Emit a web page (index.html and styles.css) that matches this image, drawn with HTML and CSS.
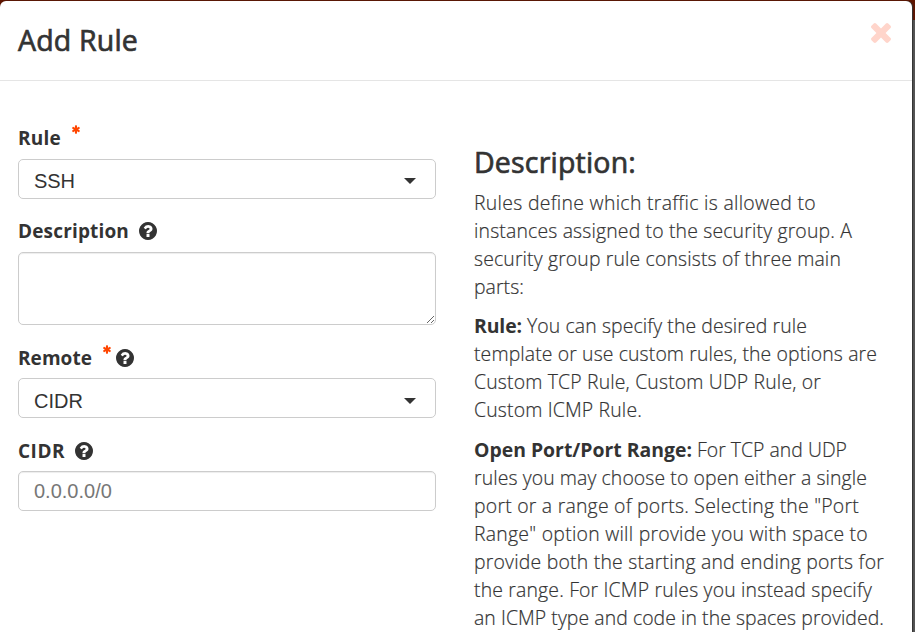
FILE: index.html
```html
<!DOCTYPE html>
<html lang="en">
<head>
<meta charset="utf-8">
<title>Add Rule</title>
<link rel="stylesheet" href="styles.css">
</head>
<body>
<svg class="defs" width="0" height="0">
  <symbol id="help" viewBox="0 0 1536 1536"><path d="M896 1248v-192q0-14-9-23t-23-9h-192q-14 0-23 9t-9 23v192q0 14 9 23t23 9h192q14 0 23-9t9-23zM1152 576q0-88-55.500-163t-138.500-116-170-41q-243 0-371 213-15 24 8 42l132 100q7 6 19 6 16 0 25-12 53-68 86-92 34-24 86-24 48 0 85.500 26t37.500 59q0 38-20 61t-68 45q-63 28-115.500 86.500t-52.500 125.500v36q0 14 9 23t23 9h192q14 0 23-9t9-23q0-19 21.500-49.500t54.500-49.500q32-18 49-28.500t46-35 44.500-48 28-60.500 12.500-81zM1536 768q0 209-103 385.500t-279.500 279.500-385.500 103-385.500-103-279.500-279.500-103-385.500 103-385.500 279.500-279.500 385.500-103 385.500 103 279.500 279.500 103 385.500z"/></symbol>
  <symbol id="star" viewBox="0 0 1482 1536"><path d="M1386 922q46 26 59.500 77.500t-12.500 97.500l-64 110q-26 46-77.500 59.500t-97.500-12.500l-266-153v307q0 52-38 90t-90 38h-128q-52 0-90-38t-38-90v-307l-266 153q-46 26-97.500 12.500t-77.500-59.500l-64-110q-26-46-12.500-97.500t59.500-77.500l266-154-266-154q-46-26-59.500-77.500t12.500-97.500l64-110q26-46 77.500-59.500t97.500 12.500l266 153v-307q0-52 38-90t90-38h128q52 0 90 38t38 90v307l266-153q46-26 97.500-12.500t77.500 59.500l64 110q26 46 12.500 97.500t-59.500 77.500l-266 154z"/></symbol>
</svg>
<div class="modal">
  <header class="modal-header">
    <h1><span data-width="120">Add Rule</span></h1>
    <svg class="close" viewBox="0 0 1188 1188"><path d="M1188 956q0 40-28 68l-136 136q-28 28-68 28t-68-28L594 866l-294 294q-28 28-68 28t-68-28L28 1024q-28-28-28-68t28-68l294-294L28 300Q0 272 0 232t28-68L164 28q28-28 68-28t68 28l294 294L888 28q28-28 68-28t68 28l136 136q28 28 28 68t-28 68L866 594l294 294q28 28 28 68z"/></svg>
  </header>
  <div class="modal-body">
    <form class="fields">
      <div class="label"><span data-width="43">Rule</span><svg class="required"><use href="#star"/></svg></div>
      <div class="control select"><span data-width="41">SSH</span><i class="caret"></i></div>
      <div class="label"><span data-width="111">Description</span><svg class="help"><use href="#help"/></svg></div>
      <textarea class="control area"></textarea>
      <div class="label low"><span data-width="74">Remote</span><svg class="required"><use href="#star"/></svg><svg class="help near"><use href="#help"/></svg></div>
      <div class="control select"><span data-width="49">CIDR</span><i class="caret"></i></div>
      <div class="label low"><span data-width="47">CIDR</span><svg class="help"><use href="#help"/></svg></div>
      <input class="control" placeholder="0.0.0.0/0">
    </form>
    <section class="info">
      <h2><span data-width="162">Description:</span></h2>
      <p>
        <span data-width="342">Rules define which traffic is allowed to</span>
        <span data-width="378">instances assigned to the security group. A</span>
        <span data-width="367">security group rule consists of three main</span>
        <span data-width="50">parts:</span>
      </p>
      <p>
        <span class="pair"><b data-width="48">Rule:</b><span data-width="280">You can specify the desired rule</span></span>
        <span data-width="403">template or use custom rules, the options are</span>
        <span data-width="347">Custom TCP Rule, Custom UDP Rule, or</span>
        <span data-width="168">Custom ICMP Rule.</span>
      </p>
      <p>
        <span class="pair"><b data-width="218">Open Port/Port Range:</b><span data-width="150">For TCP and UDP</span></span>
        <span data-width="393">rules you may choose to open either a single</span>
        <span data-width="385">port or a range of ports. Selecting the "Port</span>
        <span data-width="394">Range" option will provide you with space to</span>
        <span data-width="410">provide both the starting and ending ports for</span>
        <span data-width="398">the range. For ICMP rules you instead specify</span>
        <span data-width="410">an ICMP type and code in the spaces provided.</span>
      </p>
    </section>
  </div>
</div>
<script src="script.js"></script>
</body>
</html>
```
FILE: styles.css
```css
* { box-sizing: border-box; }
body {
  margin: 0;
  height: 632px;
  overflow: hidden;
  padding: 1px 3px 0 0;
  background: linear-gradient(#5e1500 20px, #555 20px);
  color: #333;
  font: 300 19.4px/28px "Open Sans", "Noto Sans", sans-serif;
}
.defs { display: block; width: 0; height: 0; }
.modal { height: 631px; background: #fff; border-radius: 6px 6px 0 0; box-shadow: 1px 0 1px #333; }
.modal-header {
  height: 80px;
  border-bottom: 1px solid #e5e5e5;
  padding: 22px 21px 0 18px;
  display: flex;
  justify-content: space-between;
}
h1, h2 { margin: 0; font-size: 28.5px; font-weight: 400; line-height: 34px; -webkit-text-stroke: .7px #333; }
.close { width: 20px; height: 20px; fill: #ffd5cb; }
.modal-body { display: flex; gap: 38px; padding-left: 18px; }
.fields { width: 418px; padding-top: 37px; }
.label { display: flex; align-items: center; height: 41px; font-size: 19px; font-weight: 700; padding-bottom: 2px; }
.label.low { padding-bottom: 0; }
.help { width: 18px; height: 18px; margin-left: 10px; fill: #333; }
.required { width: 8px; height: 9px; margin: -16px 0 0 11px; fill: #ff4500; }
.help.near { margin-left: 5px; }
.low .required { margin-top: -17px; }
.control {
  display: block;
  width: 100%;
  height: 40px;
  border: 1px solid #ccc;
  border-radius: 5px;
  padding: 0 15px;
  background: #fff;
  box-shadow: inset 0 1px 1px rgba(0, 0, 0, .075);
  font: 400 20px/38px "Liberation Sans", sans-serif;
  color: #333;
}
.control::placeholder { color: #777; opacity: 1; }
.select { display: flex; justify-content: space-between; align-items: center; box-shadow: none; margin-bottom: 12px; padding-top: 3px; }
.low + .select { padding-top: 5px; }
.caret { border: 6px solid transparent; border-top-color: #333; border-bottom: 0; margin-right: 4px; }
.area { height: 73px; margin-bottom: 12px; resize: vertical; }
.info { width: 420px; padding-top: 64px; }
h2 { margin-bottom: 10px; }
p { margin: 0 0 12px; -webkit-text-stroke: .2px #333; }
h2 + p { margin-bottom: 11px; }
b { font-weight: 700; -webkit-text-stroke: 0; }
span, b { white-space: nowrap; }
p > span { display: block; }
p > .pair { display: flex; gap: 5px; }
[data-width] { width: max-content; }
```
FILE: script.js
```js
document.querySelectorAll("[data-width]").forEach((el) => {
  const range = document.createRange();
  range.selectNodeContents(el);
  const natural = range.getBoundingClientRect().width;
  const target = Number(el.dataset.width);
  el.style.letterSpacing = (target - natural) / el.textContent.length + "px";
});
```
